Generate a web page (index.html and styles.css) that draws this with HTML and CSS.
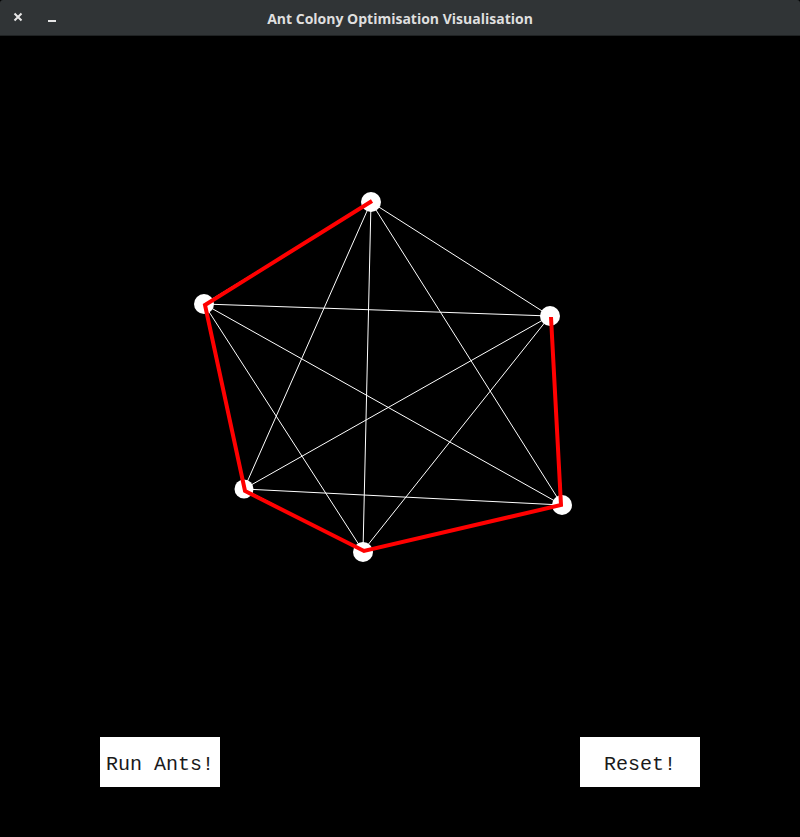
FILE: index.html
```html
<!DOCTYPE html>
<html>
<head>
<meta charset="utf-8">
<link rel="stylesheet" href="styles.css">
</head>
<body>
<div class="window">
  <header class="titlebar">
    <div class="controls">
      <svg class="ctl close" width="10" height="10" viewBox="0 0 10 10"><path d="M1.5 1.5 L8.5 8.5 M8.5 1.5 L1.5 8.5"/></svg>
      <span class="ctl min"></span>
    </div>
    <div class="title">Ant Colony Optimisation Visualisation</div>
  </header>
  <main class="canvas">
    <svg class="graph" width="800" height="701" viewBox="0 36 800 701">
      <g class="edges">
        <line x1="371" y1="202" x2="204" y2="304"/>
        <line x1="371" y1="202" x2="550" y2="316"/>
        <line x1="371" y1="202" x2="244" y2="489"/>
        <line x1="371" y1="202" x2="363" y2="551"/>
        <line x1="371" y1="202" x2="562" y2="505"/>
        <line x1="204" y1="304" x2="550" y2="316"/>
        <line x1="204" y1="304" x2="244" y2="489"/>
        <line x1="204" y1="304" x2="363" y2="551"/>
        <line x1="204" y1="304" x2="562" y2="505"/>
        <line x1="550" y1="316" x2="244" y2="489"/>
        <line x1="550" y1="316" x2="363" y2="551"/>
        <line x1="550" y1="316" x2="562" y2="505"/>
        <line x1="244" y1="489" x2="363" y2="551"/>
        <line x1="244" y1="489" x2="562" y2="505"/>
        <line x1="363" y1="551" x2="562" y2="505"/>
      </g>
      <g class="nodes">
        <circle cx="371" cy="202" r="10"/>
        <circle cx="204" cy="304" r="10"/>
        <circle cx="550" cy="316" r="10"/>
        <circle cx="244" cy="489" r="9.5"/>
        <circle cx="363" cy="552" r="10"/>
        <circle cx="562" cy="505" r="10"/>
      </g>
      <polyline class="tour" points="372,201 205,305 245,491 364,551 561,505 551,317"/>
    </svg>
    <div class="buttons">
      <button class="btn">Run Ants!</button>
      <button class="btn">Reset!</button>
    </div>
  </main>
</div>
</body>
</html>
```

FILE: styles.css
```css
html, body {
  margin: 0;
  padding: 0;
  background: #000;
}
.window {
  width: 800px;
  height: 837px;
  display: flex;
  flex-direction: column;
  background: #000;
  overflow: hidden;
}
.titlebar {
  height: 35px;
  border-bottom: 1px solid #1f2223;
  background: #303436;
  display: flex;
  align-items: center;
  position: relative;
  border-radius: 3px 3px 0 0;
}
.controls {
  display: flex;
  align-items: center;
  padding-left: 13px;
  gap: 25px;
}
.ctl.close {
  display: block;
  margin-top: -1px;
}
.ctl.close path {
  stroke: #e6e6e6;
  stroke-width: 2;
  fill: none;
}
.ctl.min {
  width: 8px;
  height: 2px;
  background: #e6e6e6;
  margin-top: 7px;
}
.title {
  position: absolute;
  left: 0;
  right: 0;
  top: 10px;
  text-align: center;
  color: #dfdfdf;
  font-family: "Open Sans", "DejaVu Sans", sans-serif;
  font-weight: bold;
  font-size: 14px;
  line-height: 18px;
}
.canvas {
  display: flex;
  flex-direction: column;
}
.graph {
  display: block;
}
.edges line {
  stroke: #fff;
  stroke-width: 1;
}
.nodes circle {
  fill: #fff;
}
.tour {
  fill: none;
  stroke: #f00;
  stroke-width: 4;
  stroke-linejoin: miter;
}
.buttons {
  display: flex;
  justify-content: space-between;
  padding: 0 100px;
}
.btn {
  width: 120px;
  height: 50px;
  background: #fff;
  border: none;
  border-radius: 0;
  padding: 4px 0 0 0;
  margin: 0;
  font-family: "Liberation Mono", "Courier New", monospace;
  font-size: 20px;
  color: #1a1a1a;
}
```
